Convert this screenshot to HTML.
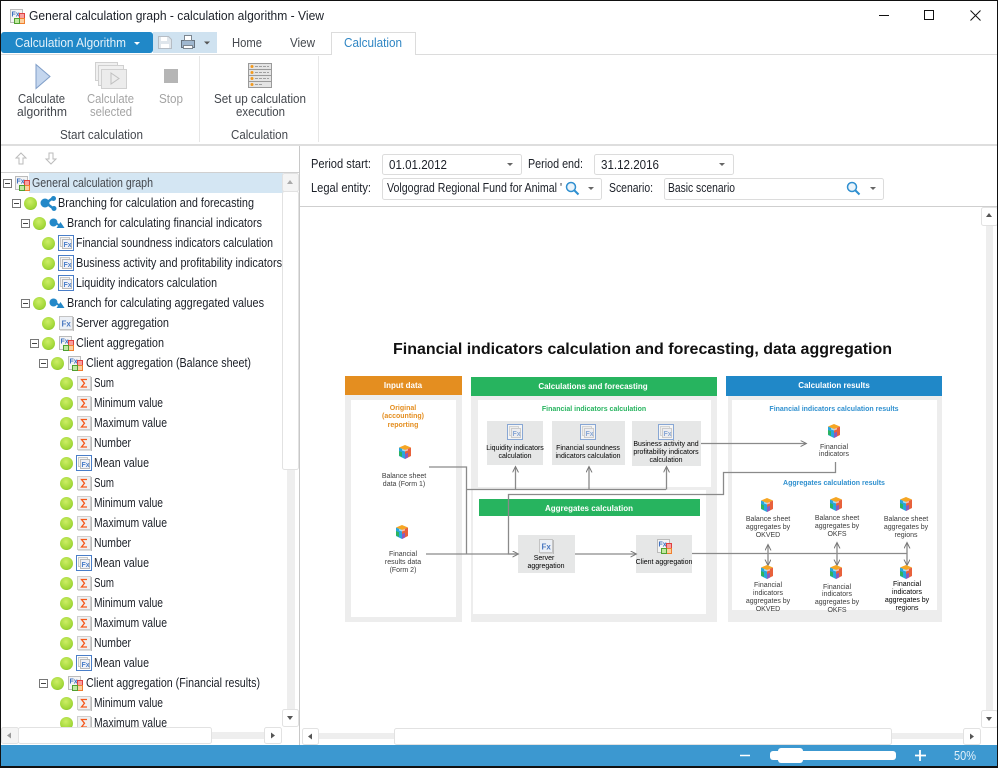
<!DOCTYPE html>
<html><head><meta charset="utf-8"><title>General calculation graph</title>
<style>
html,body{margin:0;padding:0;background:#fff;width:998px;height:768px;overflow:hidden}
svg{display:block}
text{font-family:"Liberation Sans",sans-serif;font-size:13px;fill:#1c2028}
.g{fill:#a4a4a4}.l{fill:#44484e}
.d{filter:blur(.3px)}
.d text{font-size:7px;fill:#3c3c3c;text-anchor:middle}
.d .k{fill:#000}
.d .w{fill:#fff;font-weight:bold;font-size:8px}
</style></head><body>
<svg width="998" height="768" viewBox="0 0 998 768" xmlns="http://www.w3.org/2000/svg">
<defs>
<radialGradient id="bg" cx="45%" cy="35%" r="70%"><stop offset="0" stop-color="#cdee66"/><stop offset=".8" stop-color="#9fd636"/><stop offset="1" stop-color="#7fb52a"/></radialGradient>
<symbol id="ball" width="13" height="13" viewBox="0 0 13 13"><circle cx="6.500" cy="6.500" r="6.500" fill="url(#bg)"/></symbol>
<symbol id="tog" width="9" height="9" viewBox="0 0 9 9"><rect x=".5" y=".5" width="8" height="8" fill="#fff" stroke="#777"/><path d="M2 4.500h5" stroke="#444"/></symbol>
<symbol id="sig" width="15" height="15" viewBox="0 0 15 15"><rect x=".5" y=".5" width="13" height="13" fill="#f0f0f0" stroke="#cfcfcf"/><path d="M14.500 1v14H1" fill="none" stroke="#bbb"/><path d="M10 3.500H4.500L7.500 7.300 4.500 11H10" fill="none" stroke="#f5581c" stroke-width="1.300"/></symbol>
<symbol id="calc" width="16" height="16" viewBox="0 0 16 16"><rect x=".5" y=".5" width="15" height="15" fill="#fff" stroke="#4a7ec8"/><rect x="2.500" y="2.500" width="9" height="9" fill="#f4f4f4" stroke="#c8c8c8"/><rect x="4.500" y="4.500" width="9" height="9" fill="#f0f2f8" stroke="#bbb"/><text x="5.500" y="12" style="font-size:7px;font-weight:bold;fill:#4a7ec8">Fx</text></symbol>
<symbol id="fx" width="15" height="15" viewBox="0 0 15 15"><rect x=".5" y=".5" width="13" height="13" fill="#ecf0f6" stroke="#c4c4c4"/><path d="M14.500 1v14H1" fill="none" stroke="#bbb"/><text x="2.500" y="10.500" style="font-size:8px;font-weight:bold;fill:#4a78c0">Fx</text></symbol>
<symbol id="cli" width="15" height="15" viewBox="0 0 15 15"><rect x=".5" y=".5" width="12" height="13" fill="#f4f4f4" stroke="#bbb"/><text x="1.500" y="7.500" style="font-size:7px;font-weight:bold;fill:#3b6fc0">Fx</text><rect x="9.500" y="4.500" width="5" height="5" fill="#f8a0a0" stroke="#e04040"/><rect x="9.500" y="9.500" width="5" height="5" fill="#fbd0a0" stroke="#f08030"/><rect x="4.500" y="9.500" width="5" height="5" fill="#c0e8a0" stroke="#50a030"/></symbol>
<symbol id="cube" width="16" height="16" viewBox="0 0 16 16"><path d="M8 1l6 2.500L8 6 2 3.500z" fill="#f6a623"/><path d="M2 3.500L8 6v9l-6-3z" fill="#29a6dc"/><path d="M14 3.500L8 6v9l6-3z" fill="#e8613c"/><path d="M2 7l3 1.300V13l-3-1.500z" fill="#2cb45f"/><path d="M8 10l3-1.300V13.500L8 15z" fill="#8a5cc0"/><path d="M5 5l3 1 3-1 0 1.500-3 1-3-1z" fill="#fff" opacity=".6"/></symbol>
<symbol id="branch" width="17" height="15" viewBox="0 0 17 15"><circle cx="5" cy="7" r="4.500" fill="#2388c8"/><path d="M6 7L13 2M6 7l8 6" stroke="#2388c8" stroke-width="2.500"/><circle cx="13.500" cy="2.500" r="2.500" fill="#2388c8"/><circle cx="14" cy="12.500" r="2.500" fill="#2388c8"/></symbol>
<symbol id="br2" width="16" height="12" viewBox="0 0 16 12"><circle cx="4.500" cy="4.500" r="4" fill="#2388c8"/><path d="M7 5l4 3" stroke="#2388c8" stroke-width="2"/><path d="M11.500 4l4 6h-8z" fill="#2388c8"/></symbol>
<symbol id="lens" width="15" height="15" viewBox="0 0 15 15"><circle cx="6" cy="6" r="4.500" fill="#eaf4fb" stroke="#2f8fd0" stroke-width="1.500"/><path d="M9.500 9.500l4 4" stroke="#2f8fd0" stroke-width="2"/></symbol>
<marker id="ar" markerWidth="7" markerHeight="7" refX="5.500" refY="3" orient="auto-start-reverse" markerUnits="userSpaceOnUse"><path d="M0 0l6 3-6 3" fill="none" stroke="#777"/></marker>
<clipPath id="tc"><rect x="0" y="173" width="283" height="554"/></clipPath>
</defs>

<rect width="998" height="768" fill="#fff"/>

<!-- title bar -->
<use href="#cli" x="10" y="9"/>
<text x="29" y="20" textLength="295" lengthAdjust="spacingAndGlyphs">General calculation graph - calculation algorithm - View</text>
<path d="M879 15.500h10" stroke="#111"/>
<rect x="924.500" y="10.500" width="9" height="9" fill="none" stroke="#111"/>
<path d="M970.500 10.500l10 10m0-10l-10 10" stroke="#111"/>

<!-- app button & qat -->
<rect x="153" y="32" width="64" height="21" fill="#cfe2f0"/>
<rect x="1" y="32" width="152" height="21" rx="3" fill="#2088c8"/>
<text x="15" y="47" textLength="111" lengthAdjust="spacingAndGlyphs" style="fill:#e6f2fa">Calculation Algorithm</text>
<path d="M134 42h6l-3 3z" fill="#fff"/>
<path d="M158.500 36.500h10l3 3v9h-13z" fill="#dfe6ec" stroke="#b5bcc4"/><rect x="161" y="37" width="6" height="4" fill="#fff"/><rect x="161" y="44" width="8" height="4" fill="#fff"/>
<rect x="181.500" y="40.500" width="13" height="7" fill="#9fb7cf" stroke="#66727e"/><rect x="184.500" y="35.500" width="7" height="5" fill="#fff" stroke="#7c8690"/><rect x="183.500" y="45.500" width="9" height="3" fill="#fff" stroke="#7c8690"/>
<path d="M204 41.500h6l-3 3z" fill="#555"/>

<!-- tabs -->
<text x="232" y="47" textLength="30" lengthAdjust="spacingAndGlyphs" class="l">Home</text>
<text x="290" y="47" textLength="25" lengthAdjust="spacingAndGlyphs" class="l">View</text>
<path d="M0 54.500h331.500v-22h84v22H998" fill="#fff" stroke="#dcdcdc"/>
<path d="M332 55h83" stroke="#fff" stroke-width="1.500"/>
<text x="344" y="47" textLength="58" lengthAdjust="spacingAndGlyphs" style="fill:#2f86c4">Calculation</text>

<!-- ribbon -->
<path d="M36 64.500l14 12-14 12z" fill="#c4d6ee" stroke="#7f9ec8"/>
<g fill="#f0f0f0" stroke="#d0d0d0"><rect x="95.500" y="62.500" width="22" height="18"/><rect x="98.500" y="65.500" width="25" height="20"/><rect x="101.500" y="69.500" width="25" height="19" fill="#ececec"/></g>
<path d="M111 73l8 5.500-8 5.500z" fill="none" stroke="#c0c0c0"/>
<rect x="164" y="69" width="14" height="14" fill="#b5b5b5"/>
<g fill="#e4e4e4" stroke="#9a9a9a"><rect x="248.500" y="63.500" width="23" height="6"/><rect x="248.500" y="69.500" width="23" height="6"/><rect x="248.500" y="75.500" width="23" height="6"/><rect x="248.500" y="81.500" width="23" height="6"/></g>
<g fill="#f39a1e"><circle cx="252" cy="66.500" r="1.500"/><circle cx="252" cy="72.500" r="1.500"/><circle cx="252" cy="78.500" r="1.500"/><circle cx="252" cy="84.500" r="1.500"/></g>
<path d="M255 66.500h14M255 72.500h14M255 78.500h14M255 84.500h8" stroke="#a0a0a0" stroke-dasharray="3 1"/>
<text x="18" y="103" textLength="47" lengthAdjust="spacingAndGlyphs" class="l">Calculate</text>
<text x="17" y="116" textLength="50" lengthAdjust="spacingAndGlyphs" class="l">algorithm</text>
<text x="87" y="103" textLength="47" lengthAdjust="spacingAndGlyphs" class="g">Calculate</text>
<text x="90" y="116" textLength="42" lengthAdjust="spacingAndGlyphs" class="g">selected</text>
<text x="159" y="103" textLength="24" lengthAdjust="spacingAndGlyphs" class="g">Stop</text>
<text x="214" y="103" textLength="92" lengthAdjust="spacingAndGlyphs" class="l">Set up calculation</text>
<text x="236" y="116" textLength="49" lengthAdjust="spacingAndGlyphs" class="l">execution</text>
<text x="60" y="139" textLength="83" lengthAdjust="spacingAndGlyphs" class="l">Start calculation</text>
<text x="231" y="139" textLength="57" lengthAdjust="spacingAndGlyphs" class="l">Calculation</text>
<path d="M199.500 56v86M318.500 56v86" stroke="#e6e6e6"/>
<rect x="0" y="144" width="998" height="2" fill="#dedede"/>

<!-- splitter -->
<path d="M299.500 146v599" stroke="#c8c8c8"/>

<!-- left toolbar -->
<path d="M21 153l5 5h-3v6h-4v-6h-3z" fill="#fff" stroke="#bbb"/>
<path d="M51 164l5-5h-3v-6h-4v6h-3z" fill="#fff" stroke="#bbb"/>
<path d="M1 172.500h298" stroke="#d0d0d0"/>

<!-- tree -->
<rect x="29" y="173" width="254" height="20" fill="#d4e6f3"/>
<g clip-path="url(#tc)">
<use href="#tog" x="3" y="179"/><use href="#cli" x="15" y="176"/>
<text x="32" y="187" textLength="121" lengthAdjust="spacingAndGlyphs" class="l">General calculation graph</text>

<use href="#tog" x="12" y="199"/><use href="#ball" x="24" y="197"/><use href="#branch" x="40" y="196"/>
<text x="58" y="207" textLength="196" lengthAdjust="spacingAndGlyphs">Branching for calculation and forecasting</text>

<use href="#tog" x="21" y="219"/><use href="#ball" x="33" y="217"/><use href="#br2" x="49" y="218"/>
<text x="67" y="227" textLength="195" lengthAdjust="spacingAndGlyphs">Branch for calculating financial indicators</text>

<use href="#ball" x="42" y="237"/><use href="#calc" x="58" y="235"/>
<text x="76" y="247" textLength="197" lengthAdjust="spacingAndGlyphs">Financial soundness indicators calculation</text>
<use href="#ball" x="42" y="257"/><use href="#calc" x="58" y="255"/>
<text x="76" y="267" textLength="206" lengthAdjust="spacingAndGlyphs">Business activity and profitability indicators</text>
<use href="#ball" x="42" y="277"/><use href="#calc" x="58" y="275"/>
<text x="76" y="287" textLength="141" lengthAdjust="spacingAndGlyphs">Liquidity indicators calculation</text>

<use href="#tog" x="21" y="299"/><use href="#ball" x="33" y="297"/><use href="#br2" x="49" y="298"/>
<text x="67" y="307" textLength="197" lengthAdjust="spacingAndGlyphs">Branch for calculating aggregated values</text>

<use href="#ball" x="42" y="317"/><use href="#fx" x="59" y="316"/>
<text x="76" y="327" textLength="93" lengthAdjust="spacingAndGlyphs">Server aggregation</text>

<use href="#tog" x="30" y="339"/><use href="#ball" x="42" y="337"/><use href="#cli" x="59" y="336"/>
<text x="76" y="347" textLength="88" lengthAdjust="spacingAndGlyphs">Client aggregation</text>

<use href="#tog" x="39" y="359"/><use href="#ball" x="51" y="357"/><use href="#cli" x="68" y="356"/>
<text x="86" y="367" textLength="165" lengthAdjust="spacingAndGlyphs">Client aggregation (Balance sheet)</text>

<use href="#ball" x="60" y="377"/><use href="#sig" x="77" y="376"/><text x="94" y="387" textLength="20" lengthAdjust="spacingAndGlyphs">Sum</text>
<use href="#ball" x="60" y="397"/><use href="#sig" x="77" y="396"/><text x="94" y="407" textLength="69" lengthAdjust="spacingAndGlyphs">Minimum value</text>
<use href="#ball" x="60" y="417"/><use href="#sig" x="77" y="416"/><text x="94" y="427" textLength="73" lengthAdjust="spacingAndGlyphs">Maximum value</text>
<use href="#ball" x="60" y="437"/><use href="#sig" x="77" y="436"/><text x="94" y="447" textLength="37" lengthAdjust="spacingAndGlyphs">Number</text>
<use href="#ball" x="60" y="457"/><use href="#calc" x="76" y="455"/><text x="94" y="467" textLength="55" lengthAdjust="spacingAndGlyphs">Mean value</text>
<use href="#ball" x="60" y="477"/><use href="#sig" x="77" y="476"/><text x="94" y="487" textLength="20" lengthAdjust="spacingAndGlyphs">Sum</text>
<use href="#ball" x="60" y="497"/><use href="#sig" x="77" y="496"/><text x="94" y="507" textLength="69" lengthAdjust="spacingAndGlyphs">Minimum value</text>
<use href="#ball" x="60" y="517"/><use href="#sig" x="77" y="516"/><text x="94" y="527" textLength="73" lengthAdjust="spacingAndGlyphs">Maximum value</text>
<use href="#ball" x="60" y="537"/><use href="#sig" x="77" y="536"/><text x="94" y="547" textLength="37" lengthAdjust="spacingAndGlyphs">Number</text>
<use href="#ball" x="60" y="557"/><use href="#calc" x="76" y="555"/><text x="94" y="567" textLength="55" lengthAdjust="spacingAndGlyphs">Mean value</text>
<use href="#ball" x="60" y="577"/><use href="#sig" x="77" y="576"/><text x="94" y="587" textLength="20" lengthAdjust="spacingAndGlyphs">Sum</text>
<use href="#ball" x="60" y="597"/><use href="#sig" x="77" y="596"/><text x="94" y="607" textLength="69" lengthAdjust="spacingAndGlyphs">Minimum value</text>
<use href="#ball" x="60" y="617"/><use href="#sig" x="77" y="616"/><text x="94" y="627" textLength="73" lengthAdjust="spacingAndGlyphs">Maximum value</text>
<use href="#ball" x="60" y="637"/><use href="#sig" x="77" y="636"/><text x="94" y="647" textLength="37" lengthAdjust="spacingAndGlyphs">Number</text>
<use href="#ball" x="60" y="657"/><use href="#calc" x="76" y="655"/><text x="94" y="667" textLength="55" lengthAdjust="spacingAndGlyphs">Mean value</text>

<use href="#tog" x="39" y="679"/><use href="#ball" x="51" y="677"/><use href="#cli" x="68" y="676"/>
<text x="86" y="687" textLength="174" lengthAdjust="spacingAndGlyphs">Client aggregation (Financial results)</text>
<use href="#ball" x="60" y="697"/><use href="#sig" x="77" y="696"/><text x="94" y="707" textLength="69" lengthAdjust="spacingAndGlyphs">Minimum value</text>
<use href="#ball" x="60" y="717"/><use href="#sig" x="77" y="716"/><text x="94" y="727" textLength="73" lengthAdjust="spacingAndGlyphs">Maximum value</text>
</g>

<!-- left scrollbars -->
<rect x="287" y="190" width="8" height="522" fill="#eeeeee"/>
<rect x="282.500" y="173.500" width="16" height="18" rx="2" fill="#f4f4f4" stroke="#e2e2e2"/>
<path d="M287 184h6l-3-4z" fill="#aaa"/>
<rect x="282.500" y="191.500" width="16" height="278" rx="2" fill="#fff" stroke="#e2e2e2"/>
<rect x="282.500" y="709.500" width="16" height="17" rx="2" fill="#fff" stroke="#e2e2e2"/>
<path d="M287 716h6l-3 4z" fill="#555"/>
<rect x="10" y="732" width="265" height="7" fill="#eeeeee"/>
<rect x="1.500" y="727.500" width="17" height="16" rx="2" fill="#f4f4f4" stroke="#e2e2e2"/>
<path d="M11 732.500v6l-4-3z" fill="#999"/>
<rect x="18.500" y="727.500" width="193" height="16" rx="2" fill="#fff" stroke="#e2e2e2"/>
<rect x="264.500" y="727.500" width="17" height="16" rx="2" fill="#fff" stroke="#e2e2e2"/>
<path d="M271 732.500v6l4-3z" fill="#555"/>

<!-- filter panel -->
<g fill="#fff" stroke="#dcdcdc">
<rect x="382.500" y="154.500" width="139" height="20" rx="2"/>
<rect x="594.500" y="154.500" width="139" height="20" rx="2"/>
<rect x="382.500" y="178.500" width="219" height="21" rx="2"/>
<rect x="664.500" y="178.500" width="219" height="21" rx="2"/>
</g>
<text x="311" y="168" textLength="60" lengthAdjust="spacingAndGlyphs">Period start:</text>
<text x="528" y="168" textLength="55" lengthAdjust="spacingAndGlyphs">Period end:</text>
<text x="311" y="192" textLength="60" lengthAdjust="spacingAndGlyphs">Legal entity:</text>
<text x="609" y="192" textLength="44" lengthAdjust="spacingAndGlyphs">Scenario:</text>
<text x="389" y="169" textLength="58" lengthAdjust="spacingAndGlyphs">01.01.2012</text>
<text x="601" y="169" textLength="58" lengthAdjust="spacingAndGlyphs">31.12.2016</text>
<text x="387" y="192" textLength="175" lengthAdjust="spacingAndGlyphs">Volgograd Regional Fund for Animal '</text>
<text x="668" y="192" textLength="67" lengthAdjust="spacingAndGlyphs">Basic scenario</text>
<use href="#lens" x="565" y="181"/><use href="#lens" x="846" y="181"/>
<g fill="#666"><path d="M507 163h6l-3 3z"/><path d="M719 163h6l-3 3z"/><path d="M588 187h6l-3 3z"/><path d="M870 187h6l-3 3z"/></g>
<path d="M300 206.500h698" stroke="#cfcfcf"/>

<!-- right scrollbars -->
<rect x="986" y="224" width="7" height="487" fill="#eeeeee"/>
<rect x="981.500" y="207.500" width="16" height="18" rx="2" fill="#fff" stroke="#e2e2e2"/>
<path d="M986 217h6l-3-4z" fill="#555"/>
<rect x="981.500" y="710.500" width="16" height="17" rx="2" fill="#fff" stroke="#e2e2e2"/>
<path d="M986 717h6l-3 4z" fill="#555"/>
<rect x="310" y="733" width="660" height="6" fill="#eeeeee"/>
<rect x="302.500" y="728.500" width="16" height="16" rx="2" fill="#fff" stroke="#e2e2e2"/>
<path d="M312 733.500v6l-4-3z" fill="#555"/>
<rect x="394.500" y="728.500" width="497" height="16" rx="2" fill="#fff" stroke="#e2e2e2"/>
<rect x="963.500" y="728.500" width="17" height="16" rx="2" fill="#fff" stroke="#e2e2e2"/>
<path d="M970 733.500v6l4-3z" fill="#555"/>

<!-- diagram -->
<text x="393" y="354" textLength="499" lengthAdjust="spacingAndGlyphs" style="font-size:16px;font-weight:bold;fill:#111">Financial indicators calculation and forecasting, data aggregation</text>
<g class="d">
<rect x="345" y="395" width="117" height="227" fill="#ededed"/>
<rect x="351" y="400" width="105" height="217" fill="#fff"/>
<rect x="345" y="376" width="117" height="19" fill="#e48e20"/>
<text x="403" y="388" class="w">Input data</text>
<rect x="471" y="396" width="246" height="226" fill="#ededed"/>
<rect x="478" y="400" width="233" height="87" fill="#fff"/>
<rect x="473" y="490" width="233" height="124" fill="#fff"/>
<rect x="471" y="377" width="246" height="19" fill="#27b45f"/>
<text x="593" y="389" class="w">Calculations and forecasting</text>
<rect x="479" y="499" width="221" height="17" fill="#27b45f"/>
<text x="589" y="511" class="w">Aggregates calculation</text>
<rect x="728" y="396" width="214" height="226" fill="#ededed"/>
<rect x="732" y="400" width="205" height="210" fill="#fff"/>
<rect x="726" y="376" width="216" height="20" fill="#2088c8"/>
<text x="834" y="388" class="w">Calculation results</text>

<text x="403" y="410" style="fill:#e48e20;font-weight:bold">Original</text>
<text x="403" y="418" style="fill:#e48e20;font-weight:bold">(accounting)</text>
<text x="403" y="427" style="fill:#e48e20;font-weight:bold">reporting</text>
<text x="594" y="411" style="fill:#27b45f;font-weight:bold">Financial indicators calculation</text>
<text x="834" y="411" style="fill:#2f90cf;font-weight:bold">Financial indicators calculation results</text>
<text x="834" y="485" style="fill:#2f90cf;font-weight:bold">Aggregates calculation results</text>

<g fill="#e6e7e7"><rect x="487" y="421" width="56" height="44"/><rect x="552" y="421" width="73" height="44"/><rect x="632" y="421" width="69" height="45"/><rect x="518" y="535" width="57" height="38"/><rect x="636" y="535" width="56" height="38"/></g>

<g fill="none" stroke="#8a8a8a" stroke-width="1.300">
<path d="M429 467h37.500v87"/>
<path d="M466.500 489.500H666M515.500 489.500V467" marker-end="url(#ar)"/>
<path d="M589 489.500V467" marker-end="url(#ar)"/>
<path d="M666.500 489.500V467" marker-end="url(#ar)"/>
<path d="M426 554H518" marker-end="url(#ar)"/>
<path d="M835.500 462v10.500H723.500v22H508.500v59.500H518"/>
<path d="M575 554H636" marker-end="url(#ar)"/>
<path d="M692 553.500H907"/>
<path d="M701 443.500H806" marker-end="url(#ar)"/>
<path d="M768 545v20" marker-start="url(#ar)" marker-end="url(#ar)"/>
<path d="M837 543v22" marker-start="url(#ar)" marker-end="url(#ar)"/>
<path d="M907 543v22" marker-start="url(#ar)" marker-end="url(#ar)"/>
</g>

<use href="#cube" x="397" y="444"/><use href="#cube" x="394" y="524"/>
<use href="#cube" x="826" y="423"/>
<use href="#cube" x="759" y="497"/><use href="#cube" x="828" y="496"/><use href="#cube" x="898" y="496"/>
<use href="#cube" x="759" y="564"/><use href="#cube" x="828" y="564"/><use href="#cube" x="898" y="564"/>
<use href="#calc" x="507" y="424" opacity=".6"/><use href="#calc" x="580" y="424" opacity=".6"/><use href="#calc" x="658" y="424" opacity=".6"/>
<use href="#fx" x="539" y="539"/><use href="#cli" x="657" y="539"/>

<text x="404" y="478">Balance sheet</text><text x="404" y="486">data (Form 1)</text>
<text x="403" y="556">Financial</text><text x="403" y="564">results data</text><text x="403" y="572">(Form 2)</text>
<text x="515" y="450" class="k">Liquidity indicators</text><text x="515" y="458" class="k">calculation</text>
<text x="588" y="450" class="k">Financial soundness</text><text x="588" y="458" class="k">indicators calculation</text>
<text x="666" y="446" class="k">Business activity and</text><text x="666" y="454" class="k">profitability indicators</text><text x="666" y="462" class="k">calculation</text>
<text x="544" y="560" class="k">Server</text><text x="546" y="568" class="k">aggregation</text>
<text x="664" y="564" class="k">Client aggregation</text>
<text x="834" y="449">Financial</text><text x="834" y="456">indicators</text>
<text x="768" y="521">Balance sheet</text><text x="768" y="529">aggregates by</text><text x="768" y="537">OKVED</text>
<text x="837" y="520">Balance sheet</text><text x="837" y="528">aggregates by</text><text x="837" y="536">OKFS</text>
<text x="906" y="521">Balance sheet</text><text x="906" y="529">aggregates by</text><text x="906" y="537">regions</text>
<text x="768" y="587">Financial</text><text x="768" y="595">indicators</text><text x="768" y="603">aggregates by</text><text x="768" y="611">OKVED</text>
<text x="837" y="589">Financial</text><text x="837" y="596">indicators</text><text x="837" y="604">aggregates by</text><text x="837" y="612">OKFS</text>
<text x="907" y="586" class="k">Financial</text><text x="907" y="594" class="k">indicators</text><text x="907" y="602" class="k">aggregates by</text><text x="907" y="610" class="k">regions</text>
</g>

<!-- status bar -->
<rect x="1" y="745" width="997" height="21" fill="#3c98d0"/>
<path d="M740 755.500h10" stroke="#fff" stroke-width="1.500"/>
<rect x="770" y="751" width="126" height="9" rx="3" fill="#fff"/>
<rect x="778" y="748" width="25" height="15" rx="3" fill="#fff"/>
<path d="M920 750v11M915 755.500h11" stroke="#fff" stroke-width="1.800"/>
<text x="954" y="760" textLength="22" lengthAdjust="spacingAndGlyphs" style="fill:#e4f1fa">50%</text>

<!-- window border -->
<rect x="0" y="0" width="998" height="1" fill="#111"/>
<rect x="0" y="0" width="1" height="768" fill="#111"/>
<rect x="997" y="0" width="1" height="768" fill="#111"/>
<rect x="0" y="766" width="998" height="2" fill="#111"/>
</svg>
</body></html>
